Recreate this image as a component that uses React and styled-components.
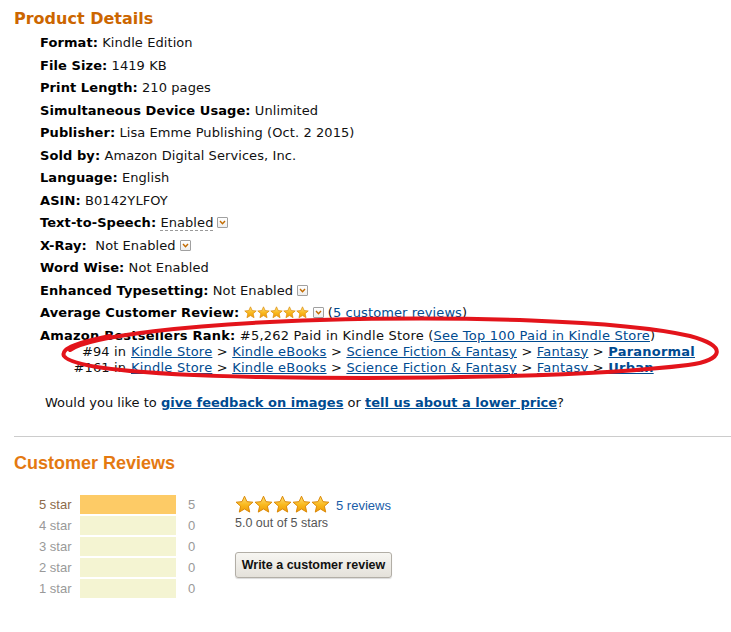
import styled, { createGlobalStyle } from "styled-components";

const GlobalStyle = createGlobalStyle`
  body {
    margin: 0;
    background: #fff;
    font-family: "DejaVu Sans", Verdana, sans-serif;
    color: #000;
  }
`;

const Page = styled.div`
  position: relative;
  width: 731px;
  height: 632px;
  overflow: hidden;
  padding-left: 14px;
  box-sizing: border-box;
`;

const Heading = styled.h2`
  margin: 0;
  padding-top: 8px;
  font-family: "DejaVu Sans", Verdana, sans-serif;
  font-size: 16px;
  line-height: 22px;
  font-weight: bold;
  color: #cc6600;
`;

const DetailList = styled.ul`
  list-style: none;
  margin: 2px 0 0;
  padding: 0 0 0 26px;
  font-size: 13px;
  color: #111;
`;

const Item = styled.li`
  line-height: 22.5px;
  white-space: nowrap;
  letter-spacing: 0.08px;
`;

const Label = styled.b`
  color: #000;
`;

const Dashed = styled.span`
  border-bottom: 1px dashed #999;
`;

const Link = styled.a`
  color: #004b91;
  text-decoration: underline;
  font-weight: ${({ $bold }) => ($bold ? "bold" : "normal")};
`;

const DropBox = styled.span`
  display: inline-block;
  width: 9px;
  height: 9px;
  border: 1px solid #a0a0a0;
  border-radius: 1px;
  background: linear-gradient(#fff, #eee);
  margin-left: 4px;
  vertical-align: -1px;
  svg {
    display: block;
  }
`;

const InlineStars = styled.span`
  display: inline-flex;
  vertical-align: -2px;
`;

const RankItem = styled.li`
  line-height: 16px;
  padding-top: 3px;
  white-space: nowrap;
  letter-spacing: 0.22px;
`;

const SubRanks = styled.ul`
  list-style: none;
  margin: 0;
  padding: 0;
`;

const SubRank = styled.li`
  line-height: 16px;
`;

const RankNum = styled.span`
  display: inline-block;
  width: 86px;
  text-align: right;
  margin-right: 5px;
  letter-spacing: 0.1px;
`;

const Feedback = styled.div`
  margin-top: 19px;
  padding-left: 31px;
  font-size: 13px;
  line-height: 16px;
  color: #111;
`;

const Divider = styled.hr`
  margin: 25px 0 0;
  border: 0;
  border-top: 1px solid #ccc;
  height: 0;
`;

const ReviewHeading = styled.h2`
  margin: 15px 0 0;
  font-family: "Liberation Sans", Arial, sans-serif;
  font-size: 18px;
  line-height: 22px;
  font-weight: bold;
  color: #e47911;
`;

const Reviews = styled.div`
  display: flex;
  margin-top: 21px;
  font-family: "Liberation Sans", Arial, sans-serif;
  font-size: 13px;
`;

const Histogram = styled.div`
  display: grid;
  grid-template-columns: 41px 96px auto;
  row-gap: 2px;
  padding-left: 25px;
  width: 196px;
`;

const StarLabel = styled.span`
  line-height: 19px;
  color: ${({ $active }) => ($active ? "#8c6a4a" : "#999")};
`;

const Bar = styled.span`
  height: 19px;
  background: ${({ $filled }) => ($filled ? "#fdcb66" : "#f4f4d2")};
`;

const Count = styled.span`
  line-height: 19px;
  color: #999;
  padding-left: 12px;
`;

const Summary = styled.div`
  display: flex;
  flex-direction: column;
  align-items: flex-start;
`;

const StarsRow = styled.div`
  display: flex;
  align-items: center;
  gap: 6px;
  height: 19px;
`;

const Stars = styled.span`
  display: inline-flex;
  svg {
    display: block;
  }
`;

const ReviewsLink = styled.a`
  color: #1a5da8;
  text-decoration: none;
  font-size: 13px;
  margin-top: 2px;
`;

const OutOf = styled.span`
  color: #555;
  font-size: 12.5px;
  line-height: 16px;
  margin-top: 1px;
`;

const WriteButton = styled.button`
  margin-top: 21px;
  width: 157px;
  height: 26px;
  padding: 0;
  border: 1px solid #b2aea6;
  border-radius: 3px;
  background: linear-gradient(#f7f6f2, #e4e1da);
  box-shadow: 0 1px 1px rgba(0, 0, 0, 0.15);
  font-family: "Liberation Sans", Arial, sans-serif;
  font-size: 12.5px;
  font-weight: bold;
  color: #111;
`;

const Annotation = styled.svg`
  position: absolute;
  left: 0;
  top: 0;
  pointer-events: none;
`;

const Drop = () => (
  <DropBox>
    <svg width="9" height="9" viewBox="0 0 9 9">
      <path d="M2 3 L4.5 5.8 L7 3" fill="none" stroke="#c26b00" strokeWidth="1.4" />
    </svg>
  </DropBox>
);

const StarIcon = ({ size, id }) => (
  <svg width={size} height={size} viewBox="0 0 24 24">
    <defs>
      <linearGradient id={id} x1="0" y1="0" x2="0" y2="1">
        <stop offset="0" stopColor="#ffe27a" />
        <stop offset="0.55" stopColor="#f9b81d" />
        <stop offset="1" stopColor="#ef9b07" />
      </linearGradient>
    </defs>
    <polygon
      points="12,1.5 15.1,8.4 22.6,9.1 16.9,14.1 18.6,21.6 12,17.7 5.4,21.6 7.1,14.1 1.4,9.1 8.9,8.4"
      fill={`url(#${id})`}
      stroke="#d98500"
      strokeWidth="1.2"
      strokeLinejoin="round"
    />
  </svg>
);

const StarSet = ({ size, prefix }) => (
  <Stars>
    {[0, 1, 2, 3, 4].map((i) => (
      <StarIcon key={i} size={size} id={`${prefix}${i}`} />
    ))}
  </Stars>
);

const details = [
  ["Format:", "Kindle Edition"],
  ["File Size:", "1419 KB"],
  ["Print Length:", "210 pages"],
  ["Simultaneous Device Usage:", "Unlimited"],
  ["Publisher:", "Lisa Emme Publishing (Oct. 2 2015)"],
  ["Sold by:", "Amazon Digital Services, Inc."],
  ["Language:", "English"],
  ["ASIN:", "B0142YLFOY"],
];

const histogram = [
  ["5 star", 5],
  ["4 star", 0],
  ["3 star", 0],
  ["2 star", 0],
  ["1 star", 0],
];

const Crumbs = ({ last }) => (
  <>
    <Link>Kindle Store</Link> &gt; <Link>Kindle eBooks</Link> &gt;{" "}
    <Link>Science Fiction &amp; Fantasy</Link> &gt; <Link>Fantasy</Link> &gt;{" "}
    <Link $bold>{last}</Link>
  </>
);

function App() {
  return (
    <Page>
      <GlobalStyle />
      <Heading>Product Details</Heading>
      <DetailList>
        {details.map(([label, value]) => (
          <Item key={label}>
            <Label>{label}</Label> {value}
          </Item>
        ))}
        <Item>
          <Label>Text-to-Speech:</Label> <Dashed>Enabled</Dashed>
          <Drop />
        </Item>
        <Item>
          <Label>X-Ray:</Label>&nbsp; Not Enabled
          <Drop />
        </Item>
        <Item>
          <Label>Word Wise:</Label> Not Enabled
        </Item>
        <Item>
          <Label>Enhanced Typesetting:</Label> Not Enabled
          <Drop />
        </Item>
        <Item>
          <Label>Average Customer Review:</Label>{" "}
          <InlineStars>
            <StarSet size={13} prefix="s" />
          </InlineStars>
          <Drop /> (<Link>5 customer reviews</Link>)
        </Item>
        <RankItem>
          <Label>Amazon Bestsellers Rank:</Label> #5,262 Paid in Kindle Store (
          <Link>See Top 100 Paid in Kindle Store</Link>)
          <SubRanks>
            <SubRank>
              <RankNum>#94 in</RankNum>
              <Crumbs last="Paranormal" />
            </SubRank>
            <SubRank>
              <RankNum>#161 in</RankNum>
              <Crumbs last="Urban" />
            </SubRank>
          </SubRanks>
        </RankItem>
      </DetailList>
      <Feedback>
        Would you like to <Link $bold>give feedback on images</Link> or{" "}
        <Link $bold>tell us about a lower price</Link>?
      </Feedback>
      <Divider />
      <ReviewHeading>Customer Reviews</ReviewHeading>
      <Reviews>
        <Histogram>
          {histogram.map(([label, count]) => (
            <>
              <StarLabel key={label} $active={count > 0}>
                {label}
              </StarLabel>
              <Bar $filled={count > 0} />
              <Count>{count}</Count>
            </>
          ))}
        </Histogram>
        <Summary>
          <StarsRow>
            <StarSet size={19} prefix="b" />
            <ReviewsLink>5 reviews</ReviewsLink>
          </StarsRow>
          <OutOf>5.0 out of 5 stars</OutOf>
          <WriteButton>Write a customer review</WriteButton>
        </Summary>
      </Reviews>
      <Annotation width="731" height="632" viewBox="0 0 731 632">
        <path
          d="M70 350 C 90 336, 190 324, 320 320 C 460 316, 620 320, 690 336 C 728 346, 724 360, 688 365 C 600 376, 420 380, 260 377 C 150 375, 72 368, 64 356 C 60 348, 80 342, 110 336"
          fill="none"
          stroke="#e3141b"
          strokeWidth="4"
          strokeLinecap="round"
        />
      </Annotation>
    </Page>
  );
}

export default App;
